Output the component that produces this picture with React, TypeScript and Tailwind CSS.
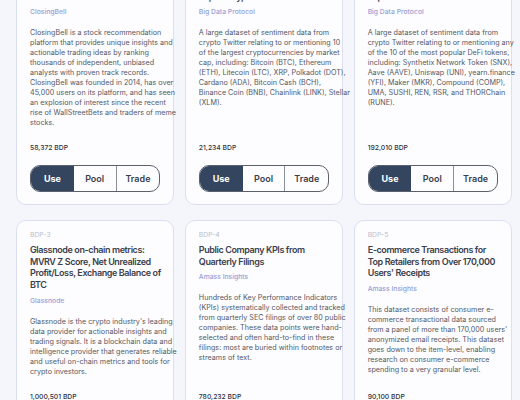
import React from "react";

interface Dataset {
  code: string;
  title: string[];
  provider: string;
  lines: string[];
  price: string;
}

const datasets: Dataset[] = [
  {
    code: "BDP-0",
    title: ["ClosingBell Stock", "Recommendations"],
    provider: "ClosingBell",
    lines: [
      "ClosingBell is a stock recommendation",
      "platform that provides unique insights and",
      "actionable trading ideas by ranking",
      "thousands of independent, unbiased",
      "analysts with proven track records.",
      "ClosingBell was founded in 2014, has over",
      "45,000 users on its platform, and has seen",
      "an explosion of interest since the recent",
      "rise of WallStreetBets and traders of meme",
      "stocks.",
    ],
    price: "58,372 BDP",
  },
  {
    code: "BDP-1",
    title: ["Crypto Twitter Sentiment:", "Top 10 Cryptocurrencies"],
    provider: "Big Data Protocol",
    lines: [
      "A large dataset of sentiment data from",
      "crypto Twitter relating to or mentioning 10",
      "of the largest cryptocurrencies by market",
      "cap, including: Bitcoin (BTC), Ethereum",
      "(ETH), Litecoin (LTC), XRP, Polkadot (DOT),",
      "Cardano (ADA), Bitcoin Cash (BCH),",
      "Binance Coin (BNB), Chainlink (LINK), Stellar",
      "(XLM).",
    ],
    price: "21,234 BDP",
  },
  {
    code: "BDP-2",
    title: ["Crypto Twitter Sentiment:", "Top 10 DeFi Tokens"],
    provider: "Big Data Protocol",
    lines: [
      "A large dataset of sentiment data from",
      "crypto Twitter relating to or mentioning any",
      "of the 10 of the most popular DeFi tokens,",
      "including: Synthetix Network Token (SNX),",
      "Aave (AAVE), Uniswap (UNI), yearn.finance",
      "(YFI), Maker (MKR), Compound (COMP),",
      "UMA, SUSHI, REN, RSR, and THORChain",
      "(RUNE).",
    ],
    price: "192,010 BDP",
  },
  {
    code: "BDP-3",
    title: [
      "Glassnode on-chain metrics:",
      "MVRV Z Score, Net Unrealized",
      "Profit/Loss, Exchange Balance of",
      "BTC",
    ],
    provider: "Glassnode",
    lines: [
      "Glassnode is the crypto industry's leading",
      "data provider for actionable insights and",
      "trading signals. It is a blockchain data and",
      "intelligence provider that generates reliable",
      "and useful on-chain metrics and tools for",
      "crypto investors.",
    ],
    price: "1,000,501 BDP",
  },
  {
    code: "BDP-4",
    title: ["Public Company KPIs from", "Quarterly Filings"],
    provider: "Amass Insights",
    lines: [
      "Hundreds of Key Performance Indicators",
      "(KPIs) systematically collected and tracked",
      "from quarterly SEC filings of over 80 public",
      "companies. These data points were hand-",
      "selected and often hard-to-find in these",
      "filings: most are buried within footnotes or",
      "streams of text.",
    ],
    price: "780,232 BDP",
  },
  {
    code: "BDP-5",
    title: [
      "E-commerce Transactions for",
      "Top Retailers from Over 170,000",
      "Users' Receipts",
    ],
    provider: "Amass Insights",
    lines: [
      "This dataset consists of consumer e-",
      "commerce transactional data sourced",
      "from a panel of more than 170,000 users'",
      "anonymized email receipts. This dataset",
      "goes down to the item-level, enabling",
      "research on consumer e-commerce",
      "spending to a very granular level.",
    ],
    price: "90,100 BDP",
  },
];

function DatasetCard({ d }: { d: Dataset }) {
  return (
    <div className="flex flex-col rounded-[10px] border border-[#dcdff0] bg-[#fdfdff] px-[13px] pt-[9px] pb-[12px]">
      <div className="text-[6.8px] leading-[10px] text-[#b9bdca]">{d.code}</div>
      <h3 className="mt-[3.5px] text-[9px] leading-[11.7px] font-semibold tracking-[-0.4px] text-[#3c404c]">
        {d.title.map((t, i) => (
          <div key={i} className="whitespace-nowrap">
            {t}
          </div>
        ))}
      </h3>
      <div className="mt-[5px] text-[6.8px] leading-[10px] font-medium text-[#969dd6]">
        {d.provider}
      </div>
      <p className="mt-[11px] text-[7.2px] leading-[10px] text-[#545864]">
        {d.lines.map((l, i) => (
          <span key={i} className="block whitespace-nowrap">
            {l}
          </span>
        ))}
      </p>
      <div className="mt-auto pt-[15px] text-[6.8px] leading-[10px] font-medium text-[#2f333f]">
        {d.price}
      </div>
      <div className="mt-[12px] grid h-[27px] grid-cols-3 overflow-hidden rounded-[10px] border border-[#5b606c] text-[9px] font-semibold">
        <button className="bg-[#34465f] font-bold text-white">Use</button>
        <button className="border-r border-[#8a8e98] text-[#3a3f4b]">Pool</button>
        <button className="text-[#3a3f4b]">Trade</button>
      </div>
    </div>
  );
}

export default function App() {
  return (
    <div
      className="h-[400px] w-[520px] overflow-hidden bg-[#f4f6fc]"
      style={{ fontFamily: "Inter, 'Noto Sans', sans-serif" }}
    >
      <div className="-mt-[44.5px] grid w-[496px] grid-cols-3 gap-x-[10.5px] gap-y-[15px] pl-[16px] box-content">
        {datasets.map((d) => (
          <DatasetCard key={d.code} d={d} />
        ))}
      </div>
    </div>
  );
}
